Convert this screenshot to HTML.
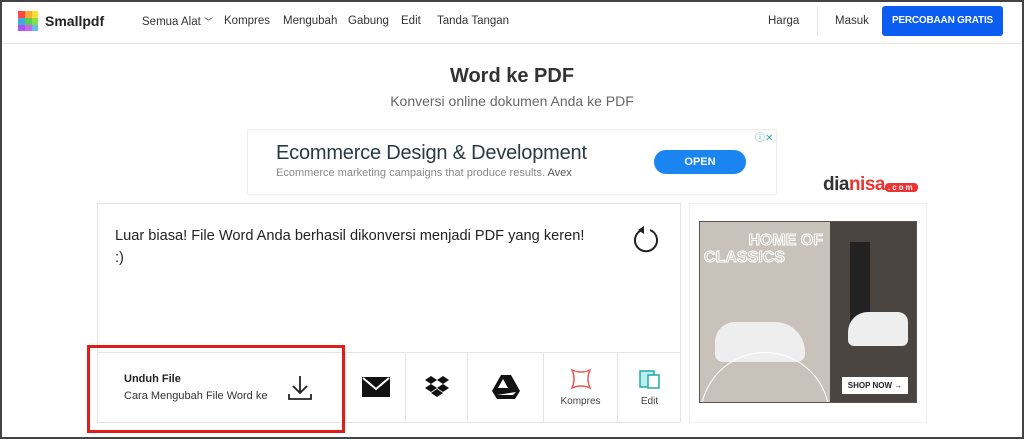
<!DOCTYPE html>
<html><head><meta charset="utf-8"><style>
*{margin:0;padding:0;box-sizing:border-box}
html,body{width:1024px;height:439px;overflow:hidden}
body{background:#fff;font-family:"Liberation Sans",sans-serif;position:relative;color:#222}
.frame{position:absolute;left:0;top:0;width:1024px;height:439px;border:2px solid #444;pointer-events:none;z-index:10}
.a{position:absolute;white-space:nowrap}
.nav{font-size:11.5px;color:#333;top:15px}
.hdr{position:absolute;left:0;top:0;width:1024px;height:44px;border-bottom:1px solid #e6e6e6}
.cell{position:absolute;top:352px;height:70px;border-left:1px solid #e5e5e5;display:flex;flex-direction:column;align-items:center;justify-content:center;font-size:10px;color:#444}
</style></head><body>
<div class="frame"></div>
<div class="hdr"></div>
<svg class="a" style="left:18px;top:11px" width="20" height="20"><rect width="7" height="7" fill="#f44"/><rect x="7" width="7" height="7" fill="#fa3"/><rect x="14" width="6" height="7" fill="#fd3"/><rect y="7" width="7" height="7" fill="#4ad"/><rect x="7" y="7" width="7" height="7" fill="#5c5"/><rect x="14" y="7" width="6" height="7" fill="#8d4"/><rect y="14" width="7" height="6" fill="#a5e"/><rect x="7" y="14" width="7" height="6" fill="#c6e"/><rect x="14" y="14" width="6" height="6" fill="#6be"/></svg>
<div class="a" style="left:45px;top:13px;font-size:14px;font-weight:bold;color:#222">Smallpdf</div>
<div class="a nav" style="left:142px">Semua Alat <span style="font-size:9px">﹀</span></div>
<div class="a nav" style="left:224px">Kompres</div>
<div class="a nav" style="left:283px">Mengubah</div>
<div class="a nav" style="left:348px">Gabung</div>
<div class="a nav" style="left:401px">Edit</div>
<div class="a nav" style="left:437px">Tanda Tangan</div>
<div class="a nav" style="left:768px">Harga</div>
<div class="a" style="left:817px;top:6px;width:1px;height:30px;background:#e6e6e6"></div>
<div class="a nav" style="left:835px">Masuk</div>
<div class="a" style="left:882px;top:6px;width:121px;height:30px;background:#0b5cf0;border-radius:3px;color:#fff;font-size:10px;font-weight:bold;text-align:center;line-height:30px;letter-spacing:-0.2px">PERCOBAAN GRATIS</div>
<div class="a" style="left:0;width:1024px;top:65px;text-align:center;font-size:20px;font-weight:bold;color:#333">Word ke PDF</div>
<div class="a" style="left:0;width:1024px;top:93px;text-align:center;font-size:14px;color:#666">Konversi online dokumen Anda ke PDF</div>
<div class="a" style="left:247px;top:129px;width:530px;height:66px;border:1px solid #eee"></div>
<div class="a" style="left:276px;top:142px;font-size:20px;color:#2a3a44;letter-spacing:-0.2px">Ecommerce Design &amp; Development</div>
<div class="a" style="left:276px;top:167px;font-size:11px;color:#888">Ecommerce marketing campaigns that produce results. <span style="color:#555">Avex</span></div>
<div class="a" style="left:654px;top:150px;width:92px;height:24px;border-radius:12px;background:#1a84f0;color:#fff;font-size:11px;font-weight:bold;text-align:center;line-height:24px">OPEN</div>
<div class="a" style="left:755px;top:129px;font-size:10px;color:#3ab">ⓘ✕</div>
<div class="a" style="left:823px;top:174px;font-size:19px;font-weight:bold;color:#333;letter-spacing:-0.5px">dia<span style="color:#e33">nisa</span><span style="font-size:8px;background:#e33;color:#fff;border-radius:4px;padding:0 3px;letter-spacing:2px">.com</span></div>
<div class="a" style="left:97px;top:203px;width:584px;height:220px;border:1px solid #e5e5e5"></div>
<div class="a" style="left:115px;top:225px;font-size:14.6px;line-height:22px;color:#222">Luar biasa! File Word Anda berhasil dikonversi menjadi PDF yang keren!<br>:)</div>
<svg class="a" style="left:632px;top:226px" width="28" height="28"><path d="M10 4 A11 11 0 1 0 18 4" fill="none" stroke="#222" stroke-width="2"/><path d="M12 0 L12 8 L6 4Z" fill="#222"/></svg>
<div class="a" style="left:97px;top:352px;width:584px;height:1px;background:#e5e5e5"></div>
<div class="a" style="left:124px;top:373px;font-size:11px;font-weight:bold;color:#222">Unduh File</div>
<div class="a" style="left:124px;top:390px;font-size:11px;color:#333">Cara Mengubah File Word ke</div>
<svg class="a" style="left:288px;top:375px" width="24" height="26"><path d="M12 1V18M5 11L12 18L19 11M1 19V24H23V19" fill="none" stroke="#222" stroke-width="1.8"/></svg>
<div class="cell" style="left:345px;width:60px"><svg width="28" height="20"><rect width="28" height="20" fill="#111"/><path d="M1 1L14 12L27 1" fill="none" stroke="#fff" stroke-width="2"/></svg></div>
<div class="cell" style="left:405px;width:62px"><svg width="26" height="22" viewBox="0 0 26 22"><g fill="#111"><path d="M7 0L13 4L7 8L1 4Z"/><path d="M19 0L25 4L19 8L13 4Z"/><path d="M7 8L13 12L7 16L1 12Z"/><path d="M19 8L25 12L19 16L13 12Z"/><path d="M13 13L19 17L13 21L7 17Z"/></g></svg></div>
<div class="cell" style="left:467px;width:76px"><svg width="28" height="24"><path d="M9 0H19L28 16L23 24H5L0 16Z" fill="#111"/><path d="M11 4L16 13H6Z M5 20H21L24 17" fill="#fff"/></svg></div>
<div class="cell" style="left:543px;width:74px"><svg width="22" height="22" style="margin-bottom:6px"><path d="M2 2Q11 6 20 2Q16 11 20 20Q11 16 2 20Q6 11 2 2Z" fill="none" stroke="#e55" stroke-width="1.5"/></svg>Kompres</div>
<div class="cell" style="left:617px;width:64px"><svg width="22" height="22" style="margin-bottom:6px"><rect x="1" y="3" width="14" height="16" fill="#bee" stroke="#2aa" stroke-width="1.5"/><rect x="9" y="7" width="11" height="13" fill="#fff" stroke="#2aa" stroke-width="1.5"/></svg>Edit</div>
<div class="a" style="left:87px;top:345px;width:258px;height:88px;border:3px solid #e21b1b"></div>
<div class="a" style="left:689px;top:203px;width:238px;height:220px;border:1px solid #eee"></div>
<div class="a" style="left:699px;top:221px;width:218px;height:182px;background:#c8c2ba;border:1px solid #555;overflow:hidden">
<div class="a" style="left:130px;top:0;width:88px;height:182px;background:#4a4540"></div>
<div class="a" style="left:150px;top:20px;width:20px;height:90px;background:#222"></div>
<div class="a" style="left:15px;top:100px;width:90px;height:40px;background:#eee;border-radius:20px 30px 8px 8px"></div>
<div class="a" style="left:148px;top:90px;width:60px;height:34px;background:#eee;border-radius:20px 10px 6px 6px"></div>
<div class="a" style="left:4px;top:10px;font-size:16px;font-weight:bold;color:transparent;-webkit-text-stroke:1px #fff;line-height:17px;text-align:left">&nbsp;&nbsp;&nbsp;&nbsp;&nbsp;&nbsp;&nbsp;&nbsp;&nbsp;&nbsp;HOME OF<br>CLASSICS</div>
<div class="a" style="left:0;top:130px;width:130px;height:130px;border:1px solid #fff;border-radius:50%"></div>
<div class="a" style="left:142px;top:155px;width:66px;height:17px;background:#fff;font-size:8px;font-weight:bold;line-height:17px;text-align:center;color:#222">SHOP NOW →</div>
</div>
</body></html>
